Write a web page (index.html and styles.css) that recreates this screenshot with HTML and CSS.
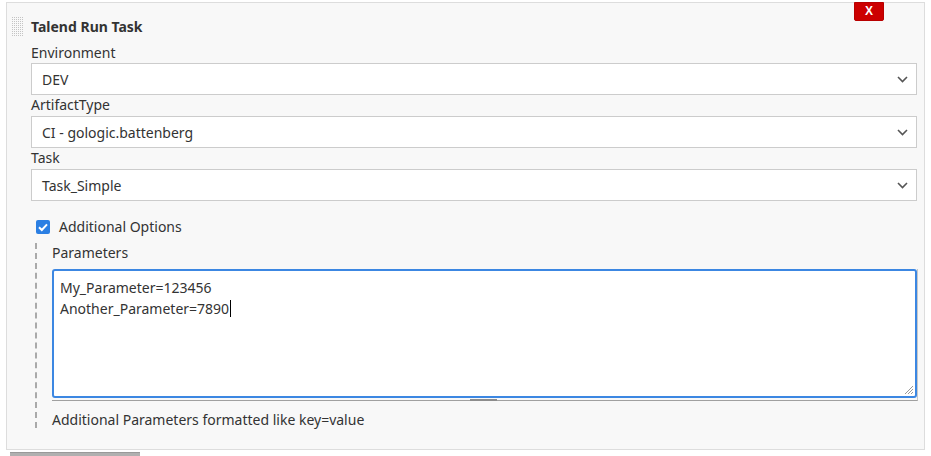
FILE: index.html
```html
<!DOCTYPE html>
<html>
<head>
<meta charset="utf-8">
<link rel="stylesheet" href="styles.css">
</head>
<body>
<div class="panel">
  <svg class="grip" width="12" height="20" viewBox="0 0 12 20">
    <defs>
      <pattern id="dots" width="2" height="2" patternUnits="userSpaceOnUse">
        <rect x="0" y="0" width="1" height="1" fill="#c4c4c4"/>
      </pattern>
    </defs>
    <rect width="12" height="20" fill="url(#dots)"/>
  </svg>
  <div class="close">X</div>
  <div class="header"><span class="title">Talend Run Task</span></div>

  <div class="field">
    <div class="label">Environment</div>
    <div class="select"><span>DEV</span><svg class="chev" width="11" height="7" viewBox="0 0 11 7"><path d="M1 1 L5.5 5.5 L10 1" fill="none" stroke="#555" stroke-width="1.6"/></svg></div>
  </div>
  <div class="field">
    <div class="label">ArtifactType</div>
    <div class="select"><span>CI - gologic.battenberg</span><svg class="chev" width="11" height="7" viewBox="0 0 11 7"><path d="M1 1 L5.5 5.5 L10 1" fill="none" stroke="#555" stroke-width="1.6"/></svg></div>
  </div>
  <div class="field">
    <div class="label">Task</div>
    <div class="select"><span>Task_Simple</span><svg class="chev" width="11" height="7" viewBox="0 0 11 7"><path d="M1 1 L5.5 5.5 L10 1" fill="none" stroke="#555" stroke-width="1.6"/></svg></div>
  </div>

  <div class="check-row">
    <span class="checkbox"><svg width="14" height="14" viewBox="0 0 14 14"><path d="M3 7.2 L5.8 10 L11 4.3" fill="none" stroke="#fff" stroke-width="2"/></svg></span>
    <span class="check-label">Additional Options</span>
  </div>

  <div class="options">
    <div class="label">Parameters</div>
    <div class="ta-wrap">
      <div class="textarea">
        <div>My_Parameter=123456</div>
        <div>Another_Parameter=7890<span class="caret"></span></div>
        <svg class="resize" width="10" height="10" viewBox="0 0 10 10"><path d="M9 1 L1 9 M9 4 L4 9 M9 7 L7 9" stroke="#999" stroke-width="1"/></svg>
      </div>
      <div class="ta-handle"></div>
    </div>
    <div class="help">Additional Parameters formatted like key=value</div>
  </div>
</div>
<div class="next-bar"></div>
</body>
</html>
```
FILE: styles.css
```css
html, body {
  margin: 0;
  padding: 0;
  background: #ffffff;
}
body {
  font-family: "Noto Sans", "Open Sans", sans-serif;
  font-size: 14px;
  color: #333333;
}
.panel {
  position: relative;
  box-sizing: border-box;
  margin: 2px 0 0 6px;
  width: 919px;
  height: 448px;
  border: 1px solid #dddddd;
  background: #f8f8f8;
  padding: 0 7px 0 24px;
}
.grip {
  position: absolute;
  left: 5px;
  top: 14px;
}
.close {
  position: absolute;
  left: 847px;
  top: -1px;
  width: 28px;
  height: 17px;
  background: #cc0000;
  border: 1px solid #b80000;
  border-radius: 0 0 2px 2px;
  color: #ffffff;
  font-family: "Liberation Sans", Arial, sans-serif;
  font-weight: bold;
  font-size: 12px;
  line-height: 17px;
  text-align: center;
}
.header {
  height: 40px;
  box-sizing: border-box;
  padding-top: 14px;
  line-height: 20px;
}
.title {
  font-weight: bold;
  font-size: 14px;
}
.label {
  line-height: 20px;
  height: 20px;
}
.field-gap {
  height: 21px;
}
.field + .field .label {
  height: 21px;
}
.select {
  box-sizing: border-box;
  height: 32px;
  background: #ffffff;
  border: 1px solid #cccccc;
  display: flex;
  align-items: center;
  justify-content: space-between;
  padding: 0 8px 0 10px;
}
.chev {
  display: block;
}
.check-row {
  display: flex;
  align-items: center;
  margin-top: 16px;
  height: 20px;
  padding-left: 5px;
}
.checkbox {
  width: 14px;
  height: 14px;
  border-radius: 2px;
  background: #2b7fe3;
  display: block;
}
.checkbox svg {
  display: block;
}
.check-label {
  margin-left: 9px;
  line-height: 20px;
}
.options {
  margin: 6px 0 0 4px;
  border-left: 2px dashed #aaaaaa;
  padding: 0 0 0 15px;
  height: 185px;
  box-sizing: border-box;
}
.ta-wrap {
  position: relative;
  margin-top: 6px;
  border-bottom: 1px solid #a0a0a0;
  border-right: 1px solid #c8c8c8;
  height: 132px;
  box-sizing: border-box;
  width: 866px;
}
.textarea {
  position: relative;
  box-sizing: border-box;
  height: 129px;
  width: 865px;
  background: #ffffff;
  border: 2px solid #3c87e2;
  border-radius: 3px;
  padding: 7px 6px;
  line-height: 20.5px;
}
.caret {
  display: inline-block;
  width: 1px;
  height: 17px;
  background: #000;
  vertical-align: -3px;
  margin-left: 1px;
}
.resize {
  position: absolute;
  right: 1px;
  bottom: 1px;
}
.ta-handle {
  position: absolute;
  left: 418px;
  bottom: -1px;
  width: 27px;
  height: 2px;
  background: #8c8c8c;
}
.help {
  margin-top: 9px;
  line-height: 20px;
}
.next-bar {
  margin: 2px 0 0 10px;
  width: 130px;
  height: 3px;
  background: #b0b0b0;
  border-top: 1px solid #999;
}
```
